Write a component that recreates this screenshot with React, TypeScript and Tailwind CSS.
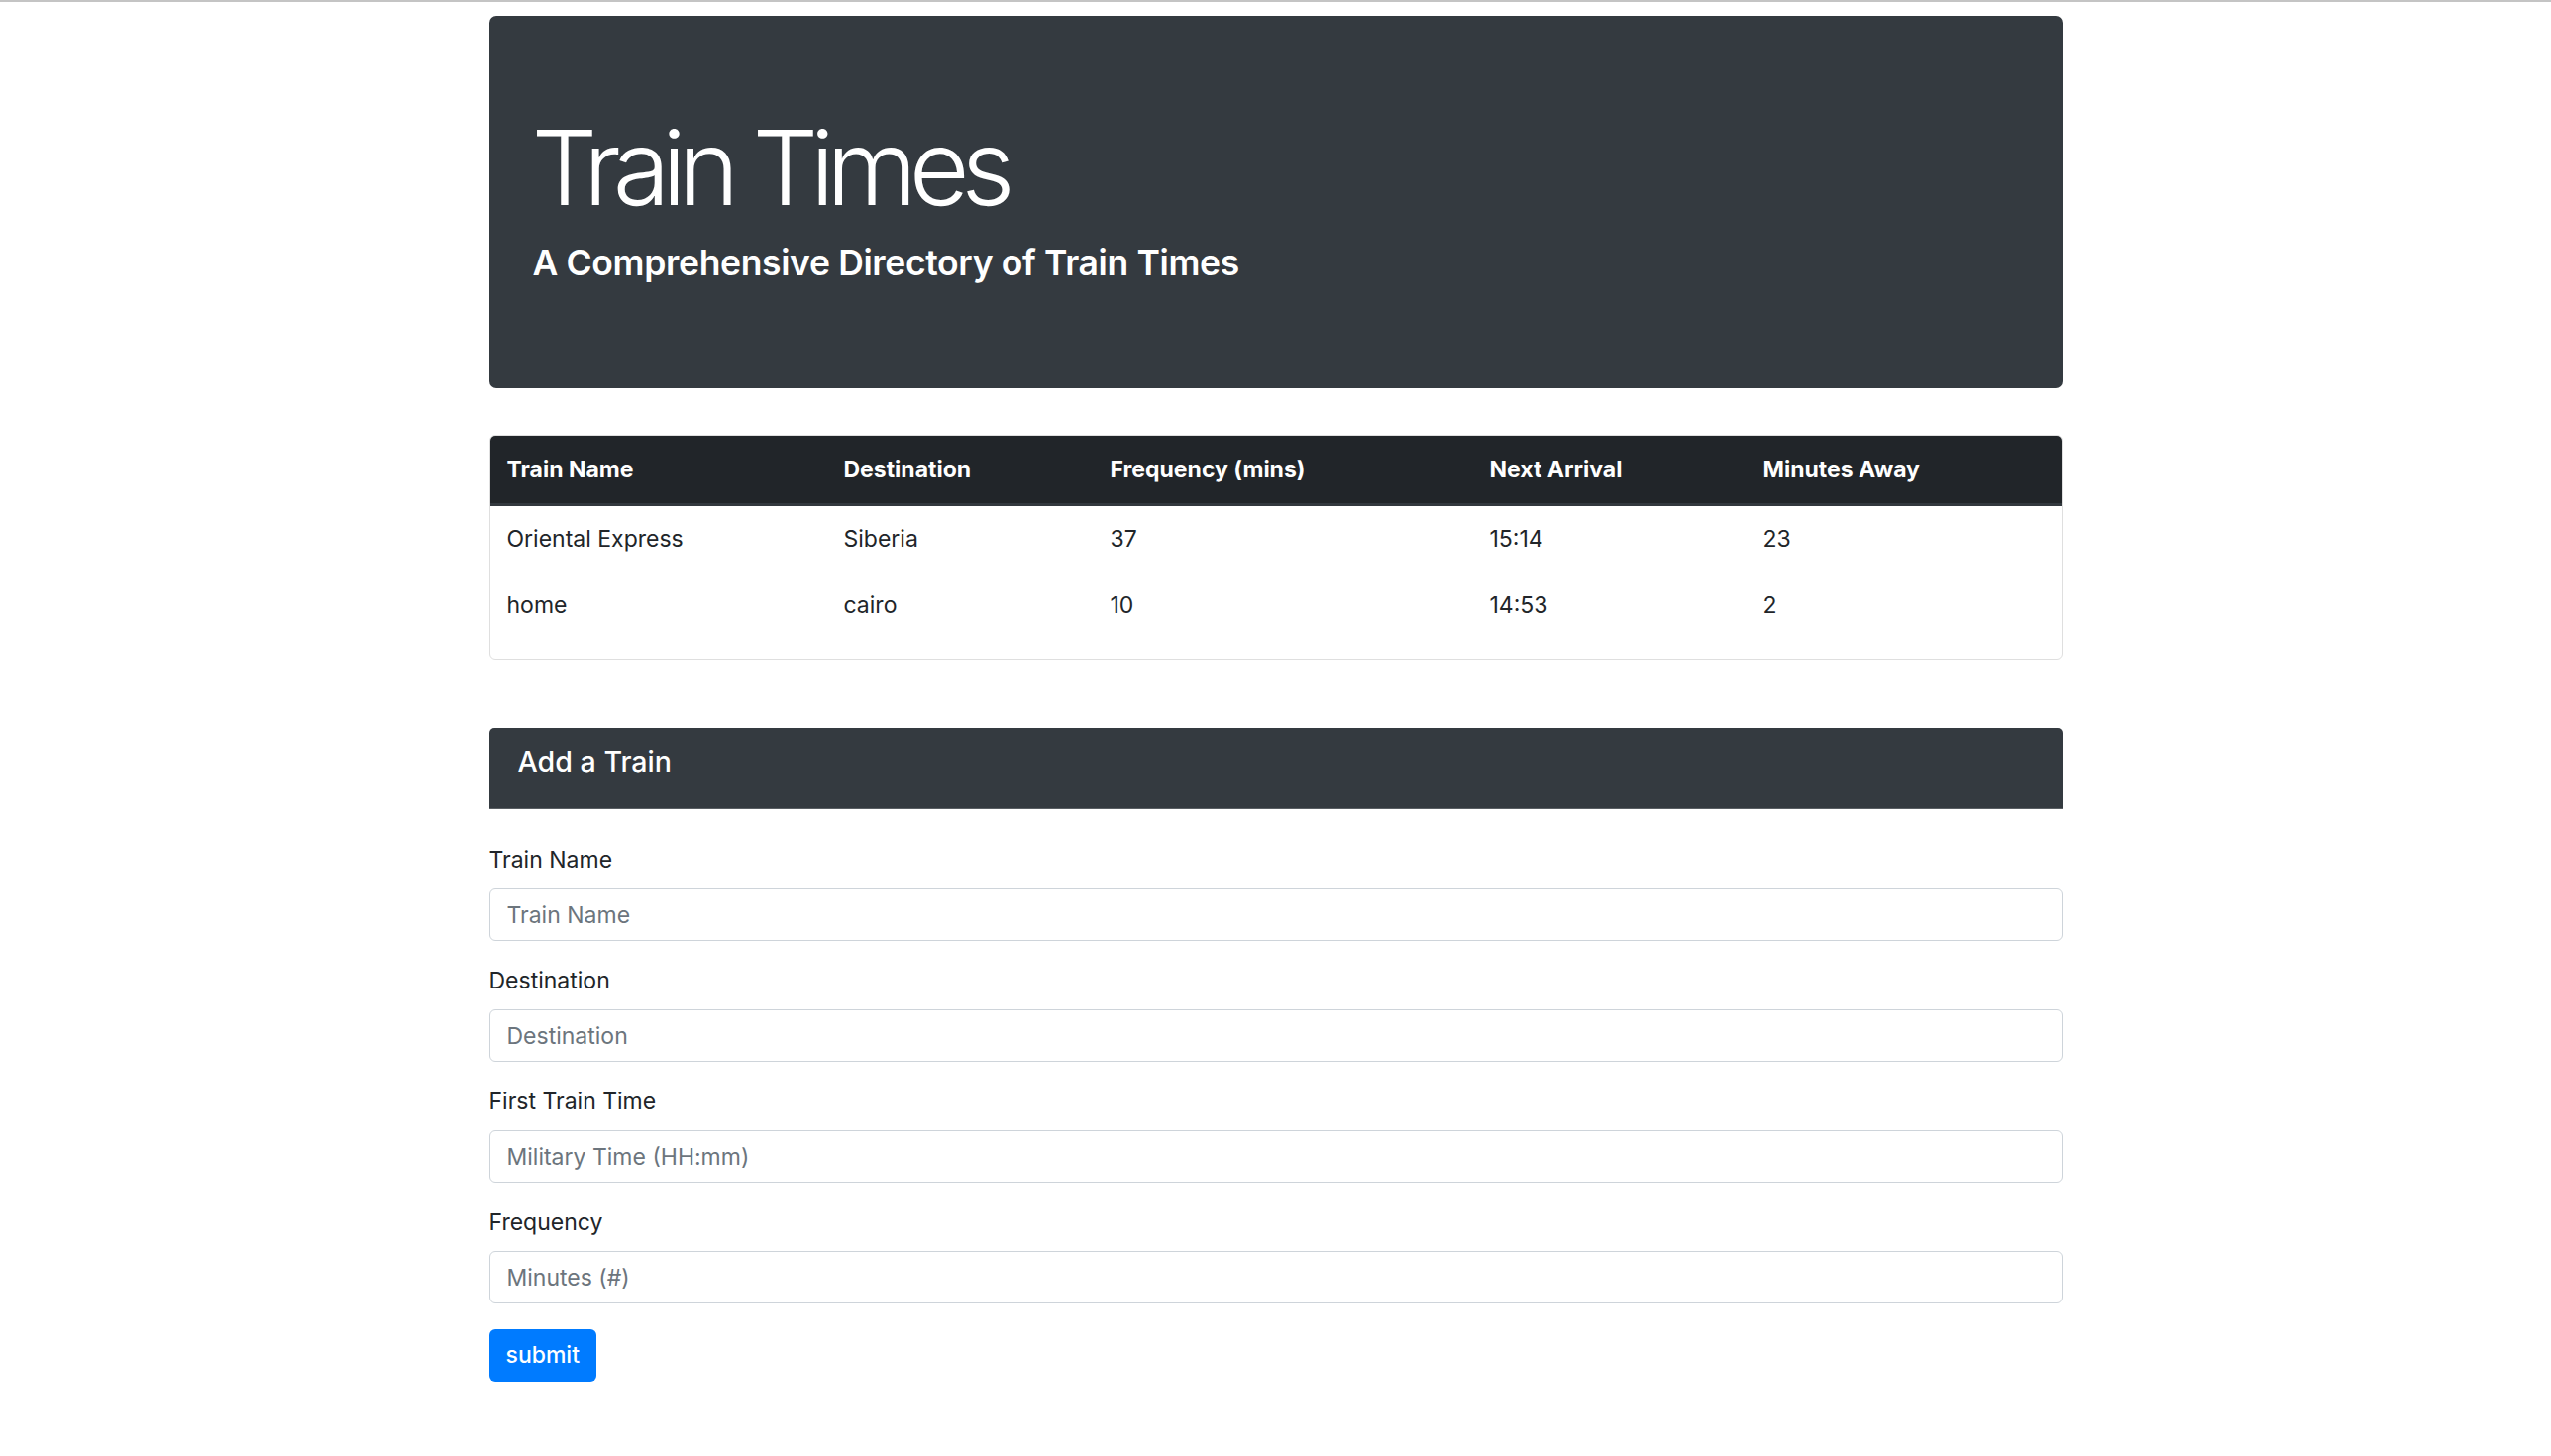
import React from "react";

type Train = {
  name: string;
  destination: string;
  frequency: number;
  nextArrival: string;
  minutesAway: number;
};

const TRAINS: Train[] = [
  { name: "Oriental Express", destination: "Siberia", frequency: 37, nextArrival: "15:14", minutesAway: 23 },
  { name: "home", destination: "cairo", frequency: 10, nextArrival: "14:53", minutesAway: 2 },
];

const COLUMNS = [
  { label: "Train Name", width: "w-[340px]" },
  { label: "Destination", width: "w-[269px]" },
  { label: "Frequency (mins)", width: "w-[383px]" },
  { label: "Next Arrival", width: "w-[276px]" },
  { label: "Minutes Away", width: "" },
];

const FIELDS = [
  { id: "train-name", label: "Train Name", placeholder: "Train Name" },
  { id: "destination", label: "Destination", placeholder: "Destination" },
  { id: "first-train", label: "First Train Time", placeholder: "Military Time (HH:mm)" },
  { id: "frequency", label: "Frequency", placeholder: "Minutes (#)" },
];

export default function App() {
  return (
    <div className="min-h-screen border-t-2 border-[#c4c4c4] bg-white pt-[14px] font-[Inter,'Liberation_Sans',sans-serif] text-[#212529]">
      <div className="mx-auto w-[1588px] pb-[60px]">
        {/* jumbotron */}
        <div className="h-[376px] rounded-[7px] bg-[#343a40] px-[43px] pt-[90px] text-white">
          <h1 className="text-[105px] font-light leading-[1.2] tracking-[-0.078em]">Train Times</h1>
          <h4 className="mt-[13px] pl-[1px] text-[35.5px] font-semibold leading-[1.2] tracking-[-0.01em]">
            A Comprehensive Directory of Train Times
          </h4>
        </div>

        {/* schedule */}
        <div className="mt-[47px] overflow-hidden rounded-[6px] border border-[#dfdfdf] pb-[21px]">
          <table className="w-full table-fixed border-collapse text-left text-[23px]">
            <thead>
              <tr>
                {COLUMNS.map((col) => (
                  <th
                    key={col.label}
                    className={`${col.width} border-b-[3px] border-[#32383e] bg-[#212529] px-[17px] py-[17px] font-bold leading-[34px] text-white`}
                  >
                    {col.label}
                  </th>
                ))}
              </tr>
            </thead>
            <tbody>
              {TRAINS.map((t, i) => (
                <tr key={t.name} className={i > 0 ? "border-t border-[#dee2e6]" : ""}>
                  <td className="px-[17px] py-[16px] leading-[34px]">{t.name}</td>
                  <td className="px-[17px] py-[16px] leading-[34px]">{t.destination}</td>
                  <td className="px-[17px] py-[16px] leading-[34px]">{t.frequency}</td>
                  <td className="px-[17px] py-[16px] leading-[34px]">{t.nextArrival}</td>
                  <td className="px-[17px] py-[16px] leading-[34px]">{t.minutesAway}</td>
                </tr>
              ))}
            </tbody>
          </table>
        </div>

        {/* add a train */}
        <div className="mt-[69px] h-[82px] rounded-t-[5px] border-b border-[#5a5f64] bg-[#343a40] px-[29px] pt-[17px]">
          <h5 className="text-[28.6px] font-medium leading-[34px] text-white">Add a Train</h5>
        </div>

        <form className="mt-[34px]" onSubmit={(e) => e.preventDefault()}>
          {FIELDS.map((f) => (
            <div key={f.id} className="mb-[23px]">
              <label htmlFor={f.id} className="mb-[12px] block text-[23px] leading-[34px]">
                {f.label}
              </label>
              <input
                id={f.id}
                type="text"
                placeholder={f.placeholder}
                className="block h-[53px] w-full rounded-[6px] border border-[#ced4da] px-[17px] text-[23px] text-[#495057] outline-none placeholder:text-[#6c757d]"
              />
            </div>
          ))}
          <button
            type="submit"
            className="mt-[3px] h-[53px] rounded-[6px] bg-[#007bff] px-[17px] text-[23px] font-medium text-white"
          >
            submit
          </button>
        </form>
      </div>
    </div>
  );
}
